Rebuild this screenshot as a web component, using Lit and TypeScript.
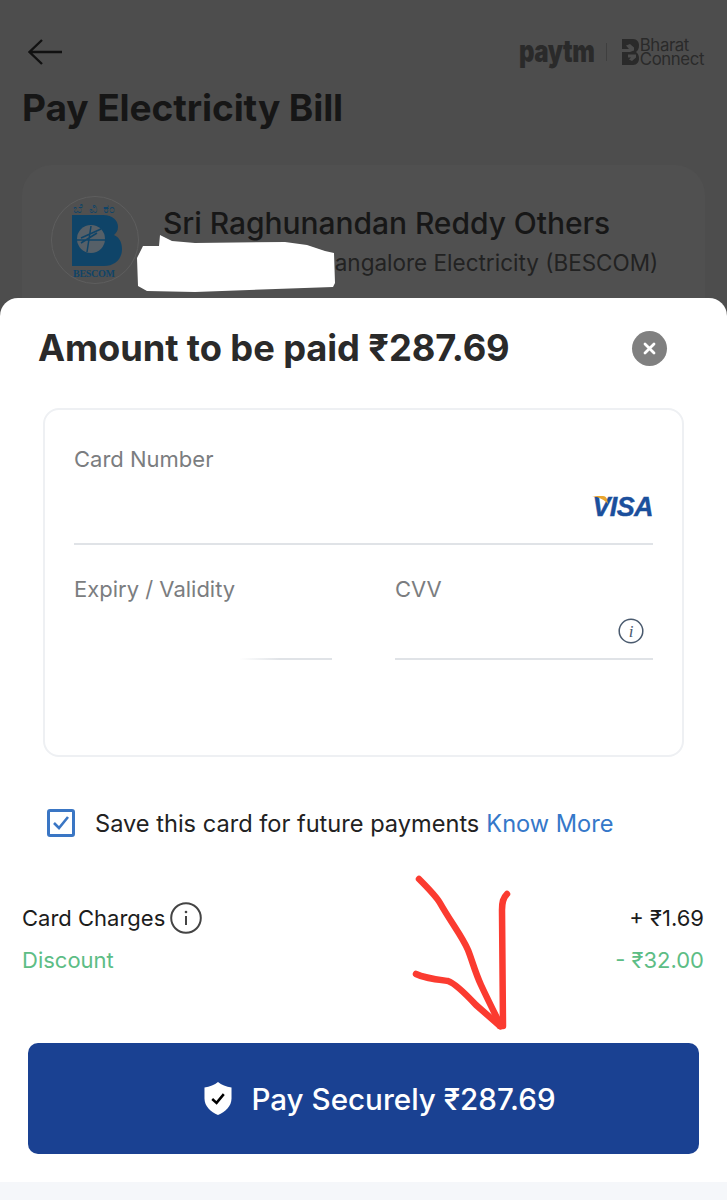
import { LitElement, html, css } from "lit";
import { customElement } from "lit/decorators.js";

@customElement("app-root")
export class AppRoot extends LitElement {
  static styles = css`
    :host { display: block; position: relative; width: 727px; height: 1200px; overflow: hidden; background: #4d4d4d; font-family: Inter, "Noto Sans", sans-serif; color: #1a1a1a; }
    .top { display: flex; justify-content: space-between; align-items: center; padding: 38px 23px 0 27px; height: 28px; }
    .brand { display: flex; align-items: center; }
    .paytm { font-size: 30px; font-weight: 900; color: #2a2a2a; line-height: 26px; width: 73px; white-space: nowrap; transform: scaleX(0.8); transform-origin: left center; letter-spacing: -0.5px; margin-top: -3px; }
    .sep { width: 1px; height: 18px; background: #3f3f3f; margin: 0 15px 0 14px; }
    .bc { font-size: 16.800px; line-height: 14px; color: #2a2a2a; margin-left: 1px; letter-spacing: -0.4px; }
    h1 { margin: 0; padding: 19px 0 0 22px; font-size: 37.100px; line-height: 46px; font-weight: 700; color: #161616; letter-spacing: -0.1px; }
    .biller { margin: 34px 22px 0; height: 200px; border-radius: 30px; background: #505050; padding: 31px 0 0 29px; display: flex; gap: 24px; box-sizing: border-box; }
    .biller-name { font-size: 30px; line-height: 36px; font-weight: 500; color: #171717; margin-top: 9px; white-space: nowrap; letter-spacing: -0.05px; }
    .biller-sub { font-size: 22.500px; line-height: 28px; color: #222; padding-left: 157px; margin-top: 8px; white-space: nowrap; }
    .blob { position: absolute; left: 135px; top: 233px; }
    .sheet { position: absolute; left: 0; right: 0; top: 298px; bottom: 0; background: #fff; border-radius: 18px 18px 0 0; display: flex; flex-direction: column; }
    .sheet-head { display: flex; justify-content: space-between; align-items: center; padding: 27px 60px 0 38px; height: 46px; }
    h2 { margin: 0; font-size: 36.300px; font-weight: 700; line-height: 46px; color: #2a2a2a; letter-spacing: -0.1px; white-space: nowrap; }
    .close { width: 35px; height: 35px; border-radius: 50%; background: #808080; display: flex; align-items: center; justify-content: center; }
    .form { margin: 37px 43px 0; height: 349px; box-sizing: border-box; border: 2px solid #eef0f3; border-radius: 16px; padding: 35px 29px 0; }
    .label { font-size: 22px; line-height: 28px; color: #7b7d80; }
    .field { display: flex; justify-content: flex-end; align-items: center; height: 70px; border-bottom: 2px solid #e0e3e7; }
    .cols { display: grid; grid-template-columns: 258px 258px; column-gap: 63px; margin-top: 30px; }
    .field.short { height: 55px; }
    .field.info { padding-right: 9px; }
    .mask { border-bottom: 2px solid; border-image: linear-gradient(90deg, #fff 0, #fff 165px, #e0e3e7 205px) 1; }
    .visa { position: relative; font-family: "Liberation Sans", sans-serif; font-style: italic; font-weight: 700; font-size: 27px; letter-spacing: -0.6px; line-height: 24px; color: #1b4f9c; -webkit-text-stroke: 0.4px #1b4f9c; margin-top: -2px; }
    .visa svg { position: absolute; left: 0; top: 0; }
    .save { display: flex; align-items: center; margin: 52px 0 0 47px; height: 28px; font-size: 23.600px; color: #222; white-space: nowrap; }
    .box { width: 28px; height: 28px; box-sizing: border-box; border: 3px solid #3a76c4; border-radius: 3px; margin-right: 20px; display: flex; align-items: center; justify-content: center; }
    .save a { color: #3578c9; margin-left: 7px; }
    .rows { margin: 65px 23px 0 22px; display: flex; flex-direction: column; gap: 10px; font-size: 22px; line-height: 32px; }
    .row { display: flex; justify-content: space-between; align-items: center; color: #1c1c1c; }
    .row.green { color: #5dbd85; }
    .ch { display: flex; align-items: center; gap: 5px; }
    .pay { margin: 67px 28px 0; height: 111px; border-radius: 10px; background: #1a4192; color: #fff; display: flex; align-items: center; justify-content: center; gap: 19px; font-size: 29.600px; font-weight: 500; padding-left: 33px; }
    .foot { margin-top: auto; height: 18px; background: #f5f7fa; }
    .arrow { position: absolute; left: 0; top: 0; pointer-events: none; }
  `;

  render() {
    return html`
      <div class="top">
        <svg width="36" height="28" viewBox="0 0 36 28" fill="none" stroke="#111" stroke-width="2.400"><path d="M35 14H3M15 2 2.500 14 15 26"/></svg>
        <div class="brand">
          <div class="paytm">paytm</div>
          <div class="sep"></div>
          <svg width="17" height="26" viewBox="0 0 17 26"><path fill="#2a2a2a" fill-rule="evenodd" d="M0 0H11C15 0 17 3 17 6.500 17 9.500 16 11.500 14 13 16 14.500 17 16.500 17 19.500 17 23 15 26 11 26H0Z M0 10H7L4 6.500 8 5 12 8.500V11.500L8 13H0Z M6 15.500H14V18.500L10 22 7 20.500 9 18.500H6Z"/></svg>
          <div class="bc">Bharat<br />Connect</div>
        </div>
      </div>
      <h1>Pay Electricity Bill</h1>
      <div class="biller">
        <svg width="88" height="88" viewBox="0 0 88 88">
          <circle cx="44" cy="44" r="43.500" fill="none" stroke="#5e5e5e"/>
          <text x="43" y="17" text-anchor="middle" font-size="13" fill="#0f4468" font-family="'Noto Sans', sans-serif" textLength="42">ಬೆವಿಕಂ</text>
          <path fill="#0f4468" fill-rule="evenodd" d="M21 19H52C62 19 67 25 67 31 67 35 65 37 63 39 68 41 71 46 71 53 71 63 64 70 53 70H21Z"/>
          <circle cx="40" cy="43" r="14" fill="#566068"/>
          <path fill="none" stroke="#0f4468" stroke-width="1.500" d="M40 30 36 56M30 42 50 33M30 47 46 37M26 44H54"/>
          <text x="43" y="81" text-anchor="middle" font-size="10" font-weight="700" fill="#0f4468" font-family="'Liberation Serif', serif" textLength="42">BESCOM</text>
        </svg>
        <div>
          <div class="biller-name">Sri Raghunandan Reddy Others</div>
          <div class="biller-sub">Bangalore Electricity (BESCOM)</div>
        </div>
      </div>
      <svg class="blob" width="204" height="64" viewBox="0 0 204 64"><path fill="#fff" d="M25 2 37 8 60 10 150 9 172 12 190 18 199 20 200 50 198 54 60 59 12 58 3 53 2 25 8 13 24 13Z"/></svg>

      <div class="sheet">
        <div class="sheet-head">
          <h2>Amount to be paid ₹287.69</h2>
          <div class="close"><svg width="13" height="13" viewBox="0 0 13 13" stroke="#fff" stroke-width="2.800" stroke-linecap="round"><path d="M2 2 11 11M11 2 2 11"/></svg></div>
        </div>
        <div class="form">
          <div class="label">Card Number</div>
          <div class="field"><div class="visa"><svg width="20" height="10" viewBox="0 0 20 10"><path fill="#e9a52e" d="M0 1H11C13 1 14 2 15 4L16 9C13 5 7 2 0 1Z"/></svg>VISA</div></div>
          <div class="cols">
            <div><div class="label">Expiry / Validity</div><div class="field short mask"></div></div>
            <div><div class="label">CVV</div><div class="field short info"><svg width="26" height="26" viewBox="0 0 26 26"><circle cx="13" cy="13" r="11.800" fill="none" stroke="#4a5a6e" stroke-width="1.500"/><text x="13" y="19" text-anchor="middle" font-size="17" font-style="italic" fill="#4a5a6e" font-family="'Liberation Serif', serif">i</text></svg></div></div>
          </div>
        </div>
        <div class="save">
          <div class="box"><svg width="18" height="16" viewBox="0 0 18 16" fill="none" stroke="#3a76c4" stroke-width="2.600"><path d="M2 8 7 13 16 2"/></svg></div>
          <span>Save this card for future payments</span><a>Know More</a>
        </div>
        <div class="rows">
          <div class="row"><div class="ch">Card Charges<svg width="32" height="32" viewBox="0 0 32 32"><circle cx="16" cy="16" r="14.800" fill="none" stroke="#444" stroke-width="2"/><path stroke="#444" stroke-width="2" d="M16 14V23"/><circle cx="16" cy="10" r="1.300" fill="#444"/></svg></div><div>+ ₹1.69</div></div>
          <div class="row green"><div>Discount</div><div>- ₹32.00</div></div>
        </div>
        <div class="pay">
          <svg width="28" height="33" viewBox="0 0 29 34"><path fill="#fff" d="M14.500 0C18 3 23 5 28.500 5.500V17C28.500 25 22 31 14.500 34 7 31 .5 25 .5 17V5.500C6 5 11 3 14.500 0Z"/><path fill="none" stroke="#000" stroke-width="2.600" d="M8.500 17.500 13 21.500 20.500 12.500"/></svg>
          <span>Pay Securely ₹287.69</span>
        </div>
        <div class="foot"></div>
      </div>

      <svg class="arrow" width="727" height="1200" viewBox="0 0 727 1200" fill="none" stroke="#fb3b30" stroke-width="6.500" stroke-linecap="round" stroke-linejoin="round">
        <path d="M419 879C428 888 436 896 440 903 452 924 462 936 468 950 472 960 475 972 481 985 488 1000 496 1016 501 1026"/>
        <path d="M507 894C503 898 502 902 502 910L503 1026H500"/>
        <path d="M416 974C424 978 433 979 448 981 454 983 462 990 476 1005 484 1012 492 1019 500 1026"/>
      </svg>
    `;
  }
}
